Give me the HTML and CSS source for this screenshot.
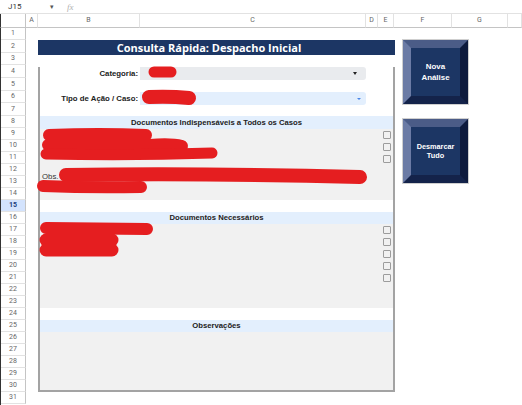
FILE: index.html
```html
<!DOCTYPE html>
<html>
<head>
  <title>Consulta Rápida: Despacho Inicial</title>
  <meta charset="UTF-8" />
  <meta name="viewport" content="width=device-width, initial-scale=1.0"/>
  <link rel="stylesheet" href="styles.css">
</head>
<body>
  <div class="formula-bar">
    <span class="name-box">J15</span>
    <span class="name-caret">▾</span>
    <span class="fx">fx</span>
  </div>

  <div class="sheet">
    <div class="corner"></div>

    <div class="col-heads">
      <div class="ch col-a">A</div>
      <div class="ch col-b">B</div>
      <div class="ch col-c">C</div>
      <div class="ch col-d">D</div>
      <div class="ch col-e">E</div>
      <div class="ch col-f">F</div>
      <div class="ch col-g">G</div>
      <div class="ch col-h"></div>
    </div>

    <div class="row-heads">
      <div class="rh">1</div>
      <div class="rh tall">2</div>
      <div class="rh">3</div>
      <div class="rh tall">4</div>
      <div class="rh tall">5</div>
      <div class="rh">6</div>
      <div class="rh tall">7</div>
      <div class="rh">8</div>
      <div class="rh">9</div>
      <div class="rh">10</div>
      <div class="rh">11</div>
      <div class="rh">12</div>
      <div class="rh">13</div>
      <div class="rh">14</div>
      <div class="rh on">15</div>
      <div class="rh">16</div>
      <div class="rh">17</div>
      <div class="rh">18</div>
      <div class="rh">19</div>
      <div class="rh">20</div>
      <div class="rh">21</div>
      <div class="rh">22</div>
      <div class="rh">23</div>
      <div class="rh">24</div>
      <div class="rh">25</div>
      <div class="rh">26</div>
      <div class="rh">27</div>
      <div class="rh">28</div>
      <div class="rh">29</div>
      <div class="rh">30</div>
      <div class="rh">31</div>
    </div>

    <div class="canvas">
      <div class="form">
        <div class="form-title">Consulta Rápida: Despacho Inicial</div>
        <div class="form-body">
          <div class="field first">
            <div class="field-label">Categoria:</div>
            <div class="field-select gray"><span class="caret"></span></div>
          </div>
          <div class="field">
            <div class="field-label">Tipo de Ação / Caso:</div>
            <div class="field-select blue"><span class="caret"></span></div>
          </div>

          <div class="section-head first-head">Documentos Indispensáveis a Todos os Casos</div>
          <div class="section-box box-1">
            <div class="check-row"><span class="checkbox"></span></div>
            <div class="check-row"><span class="checkbox"></span></div>
            <div class="check-row"><span class="checkbox"></span></div>
            <div class="obs">Obs.</div>
          </div>

          <div class="section-head">Documentos Necessários</div>
          <div class="section-box box-2">
            <div class="check-row"><span class="checkbox"></span></div>
            <div class="check-row"><span class="checkbox"></span></div>
            <div class="check-row"><span class="checkbox"></span></div>
            <div class="check-row"><span class="checkbox"></span></div>
            <div class="check-row"><span class="checkbox"></span></div>
          </div>

          <div class="section-head">Observações</div>
          <div class="section-box box-3"></div>
        </div>
      </div>

      <div class="side-buttons">
        <button class="bevel-btn">Nova<br>Análise</button>
        <button class="bevel-btn small">Desmarcar<br>Tudo</button>
      </div>
    </div>
  </div>

  <!-- redaction marks painted over the filled-in values -->
  <svg class="redact" width="522" height="405" viewBox="0 0 522 405">
    <g fill="none" stroke="#e51e20" stroke-linecap="round" stroke-linejoin="round">
      <path stroke-width="11" d="M154 72 L171 72"/>
      <path stroke-width="14" d="M149 97 Q170 96 189 98"/>
      <path stroke-width="12" d="M49 135 Q100 133 146 135"/>
      <path stroke-width="12" d="M48 145 L150 145 Q170 143 182 146"/>
      <path stroke-width="11" d="M46 154 Q130 156 212 153"/>
      <path stroke-width="14" d="M66 175 Q200 173 360 177"/>
      <path stroke-width="12" d="M43 186 Q90 188 141 187"/>
      <path stroke-width="12" d="M46 228 L147 229"/>
      <path stroke-width="13" d="M46 240 L112 240"/>
      <path stroke-width="13" d="M46 250 L112 250"/>
    </g>
  </svg>
</body>
</html>
```

FILE: styles.css
```css
:root {
  --navy: #1c3664;
  --grid-line: #e2e2e2;
  --head-line: #c4c4c4;
  --head-text: #666;
  --section-bg: #f1f1f1;
  --head-bg: #e3effd;
}
body {
  margin: 0;
  width: 522px;
  height: 405px;
  overflow: hidden;
  position: relative;
  background: #fff;
  font-family: "Liberation Sans", Arial, sans-serif;
}

/* top strip with the name box */
.formula-bar {
  height: 14px;
  box-sizing: border-box;
  border-bottom: 1px solid var(--grid-line);
  display: flex;
  align-items: center;
  font-family: Roboto, sans-serif;
  font-size: 8px;
  color: #333;
}
.name-box {
  margin-left: 8px;
  width: 42px;
}
.name-caret {
  font-size: 7px;
  color: #555;
  width: 17px;
}
.fx {
  font-family: "Liberation Serif", serif;
  font-style: italic;
  font-size: 9px;
  color: #b0b0b0;
}

/* sheet grid */
.sheet {
  display: grid;
  grid-template-columns: 26px 1fr;
  grid-template-rows: 14px 377px;
}
.corner {
  box-sizing: border-box;
  border-left: 1px solid #333;
  border-right: 1px solid var(--head-line);
  border-bottom: 1px solid var(--head-line);
}
.col-heads {
  display: flex;
}
.ch {
  box-sizing: border-box;
  height: 14px;
  border-right: 1px solid var(--grid-line);
  border-bottom: 1px solid var(--head-line);
  font-family: Roboto, sans-serif;
  font-size: 7px;
  line-height: 13px;
  text-align: center;
  color: var(--head-text);
}
.col-a { width: 12px; }
.col-b { width: 102px; }
.col-c { width: 226px; }
.col-d { width: 12px; }
.col-e { width: 16px; }
.col-f { width: 58px; }
.col-g { width: 56px; }
.col-h { flex: 1; }

.row-heads {
  box-sizing: border-box;
  border-left: 1px solid #333;
}
.rh {
  box-sizing: border-box;
  height: 12px;
  border-bottom: 1px solid var(--grid-line);
  border-right: 1px solid var(--head-line);
  font-family: Roboto, sans-serif;
  font-size: 7px;
  line-height: 11px;
  text-align: center;
  color: var(--head-text);
}
.rh.tall {
  height: 13px;
  line-height: 12px;
}
.rh.on {
  background: #d3e3fd;
  color: #1a3d7c;
  font-weight: bold;
}

.canvas {
  display: flex;
  align-items: flex-start;
  padding: 12px 0 0 12px;
  overflow: hidden;
}

/* the form block */
.form {
  width: 357px;
}
.form-title {
  height: 15px;
  background: var(--navy);
  color: #fff;
  font-family: "Open Sans", sans-serif;
  font-weight: 700;
  font-size: 11px;
  line-height: 15px;
  text-align: center;
  padding-right: 15px;
}
.form-body {
  border: 2px solid #a3a3a3;
  border-top: none;
  background: #fff;
}
.field {
  display: flex;
  height: 13px;
  margin-top: 12px;
}
.field-label {
  width: 100px;
  box-sizing: border-box;
  padding-right: 2px;
  text-align: right;
  font-weight: bold;
  font-size: 7.8px;
  line-height: 13px;
  color: #222;
}
.field-select {
  display: flex;
  align-items: center;
  justify-content: flex-end;
  border-radius: 0 3px 3px 0;
}
.field-select.gray {
  background: #e9ebee;
  padding-right: 9px;
  width: 217px;
}
.field-select.gray .caret {
  border-left: 2.5px solid transparent;
  border-right: 2.5px solid transparent;
  border-top: 3px solid #222;
}
.field-select.blue {
  background: #e3effd;
  padding-right: 5px;
  width: 221px;
}
.field-select.blue .caret {
  border-left: 2px solid transparent;
  border-right: 2px solid transparent;
  border-top: 2.5px solid #4a86e8;
}

.section-head {
  height: 12px;
  margin-top: 12px;
  background: var(--head-bg);
  text-align: center;
  font-weight: bold;
  font-size: 7.7px;
  line-height: 12px;
  color: #222;
}
.section-head.first-head {
  height: 13px;
  margin-top: 11px;
  line-height: 13px;
}
.section-box {
  background: var(--section-bg);
}
.box-1 { height: 71px; }
.box-2 { height: 84px; }
.box-3 { height: 58px; }

.check-row {
  height: 12px;
  display: flex;
  align-items: center;
  justify-content: flex-end;
  padding-right: 2px;
}
.checkbox {
  width: 8px;
  height: 8px;
  box-sizing: border-box;
  border: 1.3px solid #9c9c9c;
  border-radius: 1px;
}
.obs {
  margin-top: 6px;
  padding-left: 2px;
  font-size: 7.8px;
  line-height: 12px;
  color: #333;
}

/* beveled drawing buttons */
.side-buttons {
  display: flex;
  flex-direction: column;
  gap: 15px;
  margin-left: 8px;
}
.bevel-btn {
  width: 65px;
  height: 64px;
  box-sizing: border-box;
  padding: 0;
  border: 8px solid;
  border-color: #4b5c87 #0e1b3d #14234a #6b7ba5;
  outline: 1px solid #cfcfcf;
  background: var(--navy);
  color: #fff;
  font-family: "Liberation Sans", Arial, sans-serif;
  font-weight: bold;
  font-size: 7.9px;
  line-height: 11px;
  text-align: center;
  cursor: pointer;
}
.bevel-btn.small {
  font-size: 7.3px;
  line-height: 9px;
}

.redact {
  position: absolute;
  left: 0;
  top: 0;
  pointer-events: none;
}
```
